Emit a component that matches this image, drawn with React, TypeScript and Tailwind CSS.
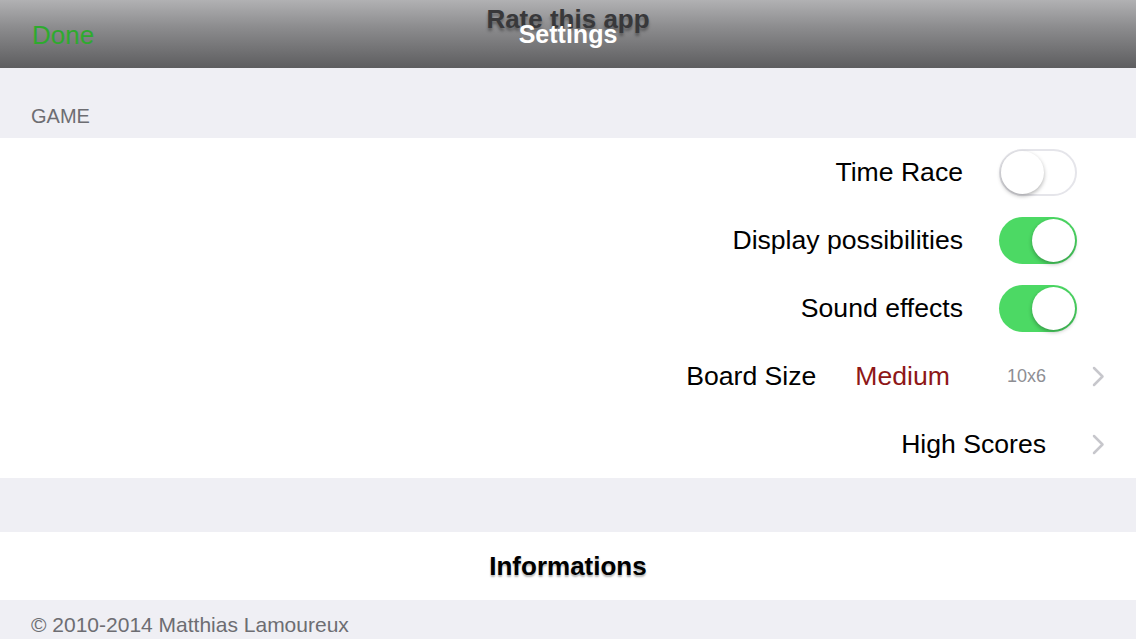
import React from "react";

const font = { fontFamily: '"Liberation Sans", Arial, sans-serif' };

function Toggle({ on }: { on: boolean }) {
  return on ? (
    <div className="relative w-[78px] h-[47px] rounded-full bg-[#4cd964] shrink-0">
      <div className="absolute right-[2px] top-[2px] w-[43px] h-[43px] rounded-full bg-white shadow-[0_2px_4px_rgba(0,0,0,0.3)]" />
    </div>
  ) : (
    <div className="relative w-[78px] h-[47px] rounded-full bg-white border-2 border-[#e5e5ea] shrink-0">
      <div className="absolute left-0 top-0 w-[43px] h-[43px] rounded-full bg-white shadow-[0_2px_4px_rgba(0,0,0,0.3)]" />
    </div>
  );
}

function Chevron() {
  return (
    <svg width="13" height="21" viewBox="0 0 13 21" className="shrink-0">
      <path d="M2 2 L10.5 10.5 L2 19" fill="none" stroke="#c7c7cc" strokeWidth="2.5" strokeLinecap="round" strokeLinejoin="round" />
    </svg>
  );
}

export default function App() {
  return (
    <div className="w-[1136px] h-[639px] overflow-hidden bg-[#efeff4] flex flex-col" style={font}>
      <div className="relative h-[68px] shrink-0 bg-[linear-gradient(to_bottom,#b1b1b3,#8c8c8e_40%,#5d5d5f)] flex items-center pl-[32px]">
        <span className="text-[26px] text-[#2eaa2e] leading-none mt-[2px]">Done</span>
        <div className="absolute left-0 right-0 top-[6px] flex justify-center">
          <span className="text-[26px] font-bold text-[#38383a] leading-none [text-shadow:0_3px_3px_rgba(0,0,0,0.35)]">Rate this app</span>
        </div>
        <div className="absolute left-0 right-0 top-[22px] flex justify-center">
          <span className="text-[25px] font-bold text-white leading-none">Settings</span>
        </div>
      </div>

      <div className="h-[70px] shrink-0 flex items-end pb-[12px] pl-[31px]">
        <span className="text-[20px] text-[#6d6d72] leading-none">GAME</span>
      </div>

      <div className="bg-white shrink-0 flex flex-col text-[26.6px] text-black">
        <div className="h-[68px] flex items-center justify-end gap-[36px] pr-[59px]">
          <span className="leading-none">Time Race</span>
          <Toggle on={false} />
        </div>
        <div className="h-[68px] flex items-center justify-end gap-[36px] pr-[59px]">
          <span className="leading-none">Display possibilities</span>
          <Toggle on={true} />
        </div>
        <div className="h-[68px] flex items-center justify-end gap-[36px] pr-[59px]">
          <span className="leading-none">Sound effects</span>
          <Toggle on={true} />
        </div>
        <div className="h-[68px] flex items-center justify-end pr-[31px]">
          <span className="leading-none">Board Size</span>
          <span className="leading-none text-[#8e1717] ml-[39px]">Medium</span>
          <span className="leading-none text-[18px] text-[#8e8e93] ml-[57px]">10x6</span>
          <span className="ml-[46px] flex"><Chevron /></span>
        </div>
        <div className="h-[68px] flex items-center justify-end pr-[31px]">
          <span className="leading-none">High Scores</span>
          <span className="ml-[46px] flex"><Chevron /></span>
        </div>
      </div>

      <div className="h-[54px] shrink-0" />

      <div className="h-[68px] shrink-0 bg-white flex items-center justify-center">
        <span className="text-[26px] font-bold text-black leading-none [text-shadow:0_2px_2px_rgba(0,0,0,0.3)]">Informations</span>
      </div>

      <div className="flex-1 pl-[31px] pt-[14px]">
        <span className="text-[21px] text-[#6d6d72] leading-none">© 2010-2014 Matthias Lamoureux</span>
      </div>
    </div>
  );
}
